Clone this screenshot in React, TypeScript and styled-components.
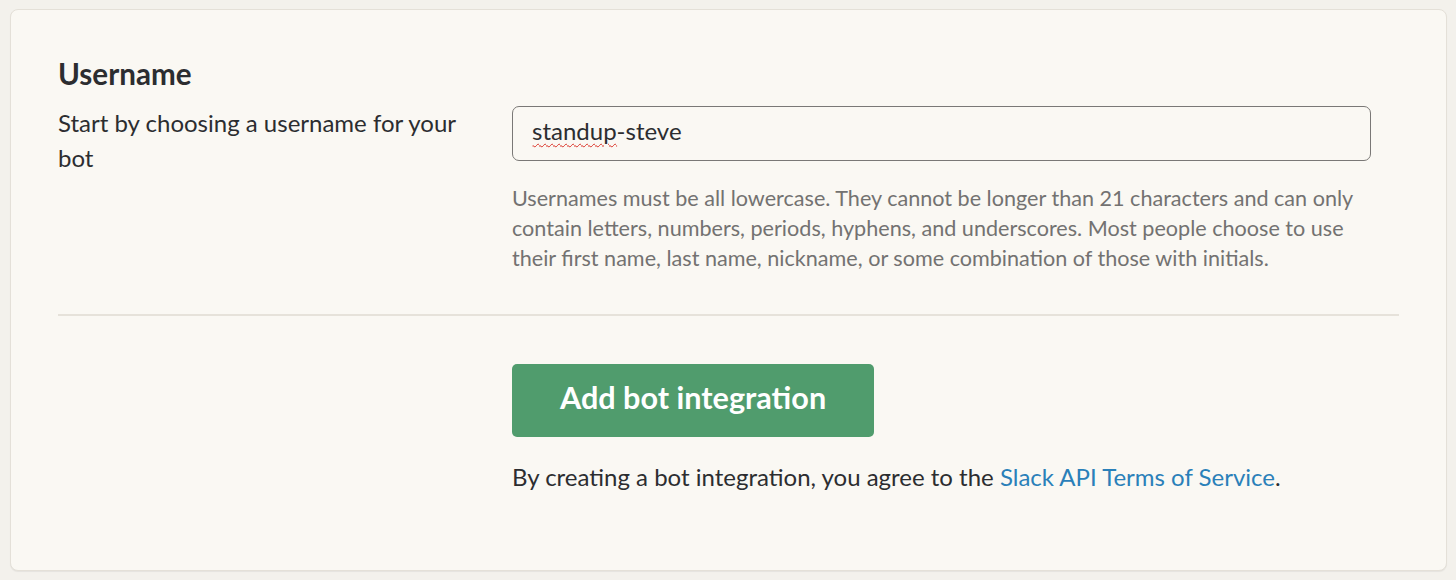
import React from "react";
import styled, { createGlobalStyle } from "styled-components";

const GlobalStyle = createGlobalStyle`
  html, body {
    margin: 0;
    padding: 0;
    background: #f3f1ec;
  }
  body {
    font-family: Lato, "Liberation Sans", sans-serif;
    color: #2c2d30;
  }
`;

const Page = styled.div`
  padding: 9px 9px 9px 10px;
`;

const Card = styled.section`
  background: #faf8f3;
  border: 1px solid #e4e0d8;
  border-radius: 8px;
  box-shadow: 0 1px 1px rgba(0, 0, 0, 0.06);
  padding: 46px 47px 76px 47px;
`;

const Heading = styled.h2`
  margin: 0 0 13px;
  font-size: 29.6px;
  line-height: 36px;
  font-weight: 700;
  color: #2c2d30;
`;

const Row = styled.div`
  display: grid;
  grid-template-columns: 454px 859px;
`;

const Label = styled.p`
  margin: 0;
  font-size: 24px;
  line-height: 35px;
  padding-right: 40px;
`;

const Field = styled.div`
  display: flex;
  flex-direction: column;
  padding-top: 1px;
`;

const InputWrap = styled.div`
  position: relative;
`;

const Input = styled.input`
  box-sizing: border-box;
  width: 100%;
  height: 55px;
  padding: 0 19px 6px;
  border: 1.5px solid #7a7876;
  border-radius: 7px;
  background: #faf8f3;
  font-family: Lato, "Liberation Sans", sans-serif;
  font-size: 24px;
  color: #2c2d30;
  outline: none;
`;

/* spellcheck squiggle drawn over the misspelled part of the value */
const Squiggle = styled.span`
  position: absolute;
  left: 20.5px;
  top: 0;
  height: 49px;
  line-height: 49px;
  font-size: 24px;
  color: transparent;
  pointer-events: none;
  text-decoration: underline wavy #d93025;
  text-decoration-thickness: 1px;
  text-underline-offset: 3px;
`;

const Help = styled.p`
  margin: 22px 0 0;
  font-size: 21.6px;
  line-height: 30px;
  color: #737271;
`;

const Divider = styled.hr`
  border: 0;
  border-top: 2px solid #e6e2da;
  margin: 41px 0 48px;
`;

const Actions = styled.div`
  margin-left: 454px;
`;

const PrimaryButton = styled.button`
  height: 73px;
  padding: 0 48px 6px;
  border: 0;
  border-radius: 5px;
  background: #509c6d;
  color: #fff;
  font-family: Lato, "Liberation Sans", sans-serif;
  font-size: 30.6px;
  font-weight: 700;
  cursor: pointer;
`;

const Terms = styled.p`
  margin: 22px 0 0;
  font-size: 24px;
  line-height: 35px;
`;

const TermsLink = styled.a`
  color: #2a80b9;
  text-decoration: none;
`;

export default function App() {
  return (
    <>
      <GlobalStyle />
      <Page>
        <Card>
          <Heading>Username</Heading>
          <Row>
            <Label>Start by choosing a username for your bot</Label>
            <Field>
              <InputWrap>
                <Input defaultValue="standup-steve" spellCheck />
                <Squiggle aria-hidden>standup</Squiggle>
              </InputWrap>
              <Help>
                Usernames must be all lowercase. They cannot be longer than 21
                characters and can only contain letters, numbers, periods,
                hyphens, and underscores. Most people choose to use their first
                name, last name, nickname, or some combination of those with
                initials.
              </Help>
            </Field>
          </Row>
          <Divider />
          <Actions>
            <PrimaryButton>Add bot integration</PrimaryButton>
            <Terms>
              By creating a bot integration, you agree to the{" "}
              <TermsLink href="#">Slack API Terms of Service</TermsLink>.
            </Terms>
          </Actions>
        </Card>
      </Page>
    </>
  );
}
